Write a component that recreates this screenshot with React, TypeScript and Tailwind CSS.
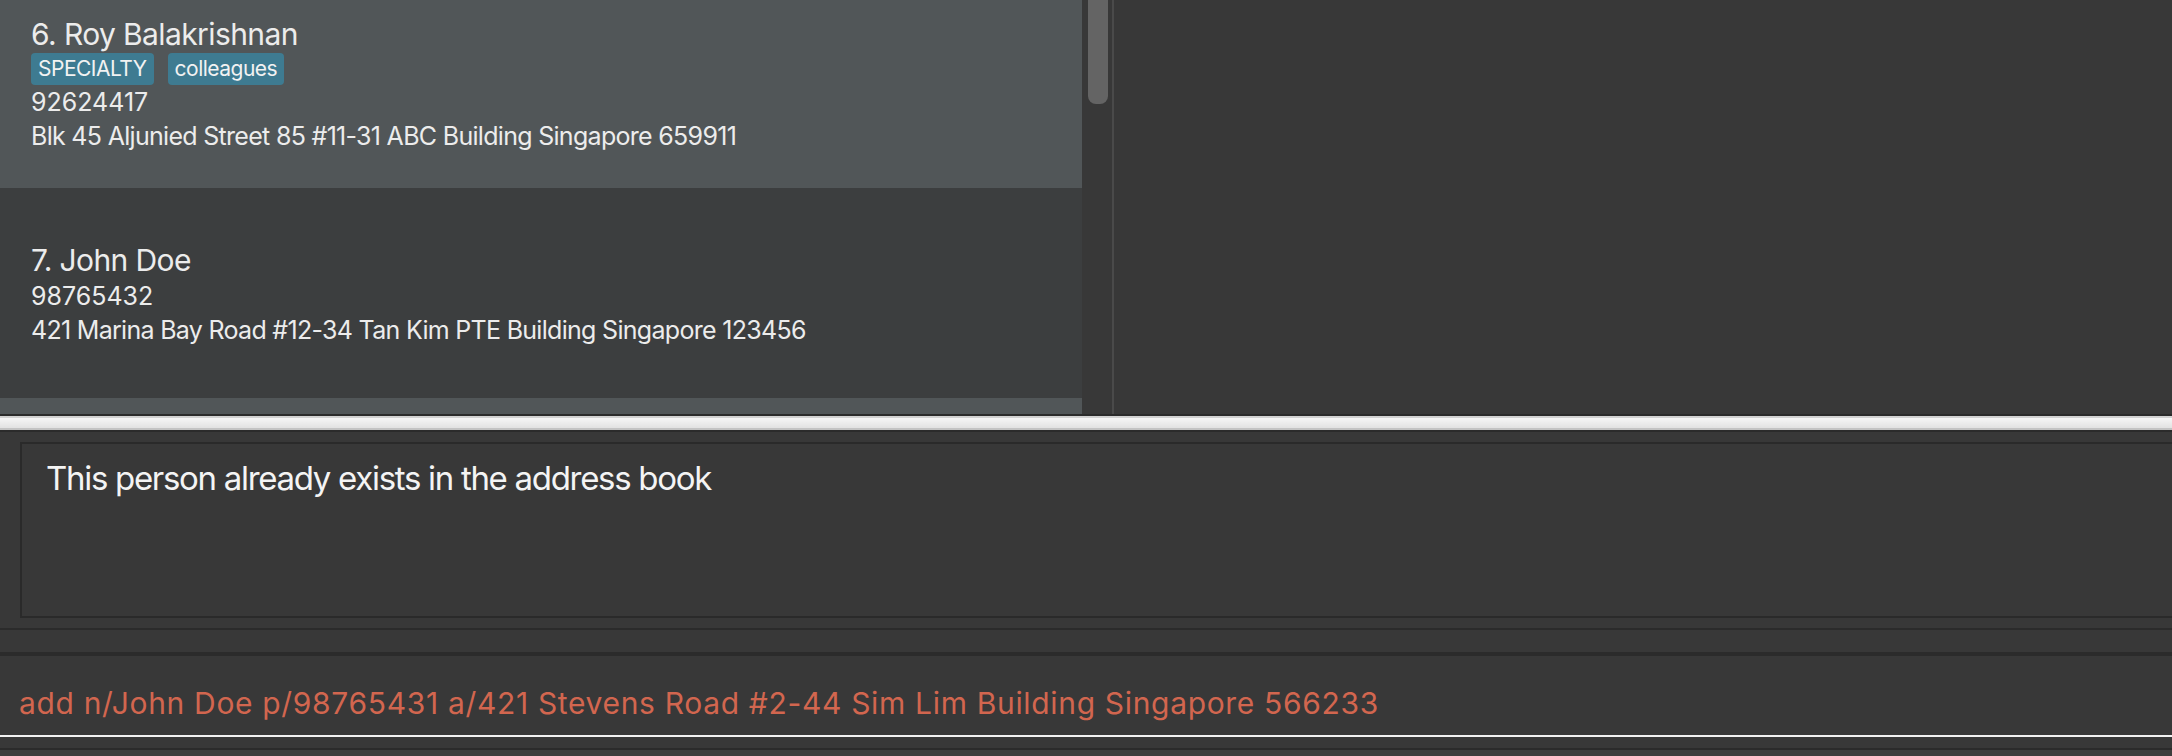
import type { ReactNode } from "react";

type Person = {
  index: number;
  name: string;
  phone: string;
  address: string;
  tags: string[];
};

const people: Person[] = [
  {
    index: 6,
    name: "Roy Balakrishnan",
    phone: "92624417",
    address: "Blk 45 Aljunied Street 85 #11-31 ABC Building Singapore 659911",
    tags: ["SPECIALTY", "colleagues"],
  },
  {
    index: 7,
    name: "John Doe",
    phone: "98765432",
    address: "421 Marina Bay Road #12-34 Tan Kim PTE Building Singapore 123456",
    tags: [],
  },
];

function PersonCard({ person, odd }: { person: Person; odd: boolean }) {
  const hasTags = person.tags.length > 0;
  return (
    <div
      className={
        odd
          ? "flex h-[188px] shrink-0 flex-col bg-[#515658] pl-[31px] pt-[15px]"
          : "flex h-[210px] shrink-0 flex-col bg-[#3c3e3f] pl-[31px] pt-[53px]"
      }
    >
      <p className="text-[30px] leading-[38px] tracking-[-0.6px] text-[#ececec]">
        {person.index}. {person.name}
      </p>
      {hasTags && (
        <div className="flex h-[32px] gap-[14px]">
          {person.tags.map((t) => (
            <span
              className="rounded-[4px] bg-[#3e7b91] px-[7px] text-[21px] leading-[32px] tracking-[-0.5px] text-[#f2f2f2]"
              key={t}
            >
              {t}
            </span>
          ))}
        </div>
      )}
      <p className="text-[25px] leading-[34px] text-[#ececec]">{person.phone}</p>
      <p className="text-[25px] leading-[34px] tracking-[-0.7px] text-[#ececec]">{person.address}</p>
    </div>
  );
}

function Rule({ className }: { className: string }): ReactNode {
  return <div className={className} />;
}

export default function App() {
  return (
    <div className="flex h-[756px] w-[2172px] flex-col overflow-hidden bg-[#383838] font-['Inter','Liberation_Sans',sans-serif]">
      {/* person list + detail pane */}
      <div className="flex h-[414px] shrink-0">
        <div className="flex w-[1082px] flex-col overflow-hidden">
          {people.map((p, i) => (
            <PersonCard key={p.index} odd={i % 2 === 0} person={p} />
          ))}
          <div className="h-[16px] shrink-0 bg-[#515658]" />
        </div>
        <div className="w-[30px] shrink-0 pl-[6px]">
          <div className="h-[104px] w-[20px] rounded-b-[8px] bg-[#646464]" />
        </div>
        <div className="w-[2px] shrink-0 bg-[#4a4a4a]" />
        <div className="flex-1 bg-[#383838]" />
      </div>

      {/* split pane divider */}
      <Rule className="h-[2px] shrink-0 bg-[#2b2b2b]" />
      <Rule className="h-[14px] shrink-0 border-y-2 border-t-[#d2d2d2] border-b-[#c3c3c3] bg-gradient-to-b from-[#f6f6f6] to-[#e2e2e2]" />
      <Rule className="h-[2px] shrink-0 bg-[#2b2b2b]" />

      {/* result display */}
      <div className="h-[196px] shrink-0 overflow-hidden pl-[20px] pt-[10px]">
        <div className="h-[176px] w-[2300px] border-2 border-[#2a2a2a] pl-[24px] pt-[12px]">
          <p className="text-[33px] leading-[44px] tracking-[-1.3px] text-[#f4f4f4]">
            This person already exists in the address book
          </p>
        </div>
      </div>
      <Rule className="h-[2px] shrink-0 bg-[#2b2b2b]" />
      <div className="h-[22px] shrink-0" />
      <Rule className="h-[4px] shrink-0 bg-[#2b2b2b]" />

      {/* command box */}
      <div className="h-[79px] shrink-0 pl-[19px] pt-[27px]">
        <p className="whitespace-nowrap text-[30px] leading-[40px] tracking-[0.67px] text-[#d2664f]">
          add n/John Doe p/98765431 a/421 Stevens Road #2-44 Sim Lim Building Singapore 566233
        </p>
      </div>
      <Rule className="h-[2px] shrink-0 bg-[#f2f2f2]" />
      <div className="h-[11px] shrink-0" />
      <Rule className="h-[2px] shrink-0 bg-[#2b2b2b]" />
      <div className="flex-1 bg-[#3d3d3d]" />
    </div>
  );
}
